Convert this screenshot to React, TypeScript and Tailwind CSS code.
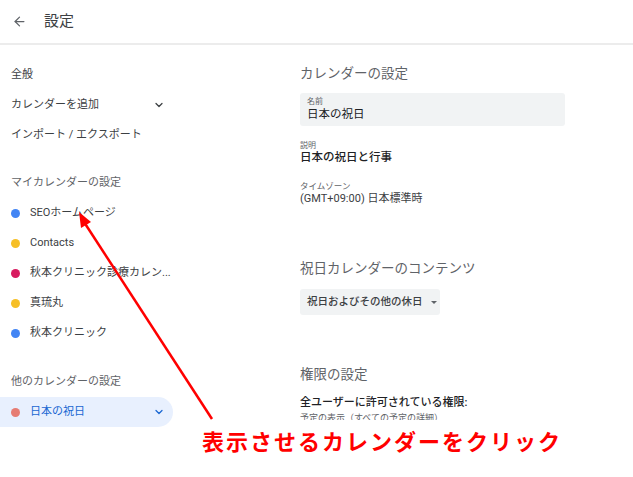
import { ArrowLeft, ChevronDown } from "lucide-react";

const font = { fontFamily: 'Roboto, "Noto Sans CJK JP", sans-serif' };

type Cal = { name: string; color: string };

const myCalendars: Cal[] = [
  { name: "SEOホームページ", color: "bg-[#4285f4]" },
  { name: "Contacts", color: "bg-[#f6bf26]" },
  { name: "秋本クリニック診療カレン...", color: "bg-[#d81b60]" },
  { name: "真琉丸", color: "bg-[#f6bf26]" },
  { name: "秋本クリニック", color: "bg-[#4285f4]" },
];

function NavRow({ label, chevron }: { label: string; chevron?: boolean }) {
  return (
    <div className="flex h-[30px] items-center justify-between whitespace-nowrap pl-[11px] pr-[8px] text-[11px] text-[#3c4043]">
      <span>{label}</span>
      {chevron && <ChevronDown className="h-3 w-3 text-[#3c4043]" strokeWidth={2.5} />}
    </div>
  );
}

function CalRow({ cal }: { cal: Cal }) {
  return (
    <div className="flex h-[30px] items-center whitespace-nowrap pl-[11px] text-[11px] text-[#3c4043]">
      <span className={`mr-[10px] h-[9px] w-[9px] shrink-0 rounded-full ${cal.color}`} />
      <span>{cal.name}</span>
    </div>
  );
}

export default function App() {
  return (
    <div className="relative h-[477px] w-[633px] overflow-hidden bg-white" style={font}>
      {/* Header */}
      <div className="flex h-[45px] items-center border-b-2 border-[#ececec] pl-[12px]">
        <ArrowLeft className="h-[15px] w-[15px] text-[#5f6368]" strokeWidth={2} />
        <span className="ml-[17px] text-[15px] text-[#3c4043]">設定</span>
      </div>

      <div className="flex">
        {/* Sidebar */}
        <div className="w-[173px] shrink-0 pt-[15px]">
          <NavRow label="全般" />
          <NavRow label="カレンダーを追加" chevron />
          <NavRow label="インポート / エクスポート" />

          <div className="mt-[18px] flex h-[30px] items-center pl-[11px] text-[11px] text-[#5f6368]">
            マイカレンダーの設定
          </div>
          {myCalendars.map((c) => (
            <CalRow key={c.name} cal={c} />
          ))}

          <div className="mt-[19px] flex h-[30px] items-center pl-[11px] text-[11px] text-[#5f6368]">
            他のカレンダーの設定
          </div>
          <div className="flex h-[30px] items-center justify-between rounded-r-full bg-[#e8f0fe] pl-[11px] pr-[8px] text-[11px] text-[#1967d2]">
            <div className="flex items-center">
              <span className="mr-[10px] h-[9px] w-[9px] rounded-full bg-[#e67c73]" />
              <span>日本の祝日</span>
            </div>
            <ChevronDown className="h-3 w-3" strokeWidth={2.5} />
          </div>
        </div>

        {/* Main */}
        <div className="ml-[127px] flex-1 pt-[17px] text-[#3c4043]">
          <div className="text-[13.5px] leading-[22px] text-[#5f6368]">カレンダーの設定</div>
          <div className="mt-[9px] flex h-[33px] w-[265px] flex-col justify-center rounded-[3px] bg-[#f1f3f4] px-[7px]">
            <div className="text-[8px] leading-[10px] text-[#5f6368]">名前</div>
            <div className="text-[11.5px] leading-[15px] text-[#202124]">日本の祝日</div>
          </div>

          <div className="mt-[15px]">
            <div className="text-[8px] leading-[9px] text-[#5f6368]">説明</div>
            <div className="text-[11.5px] font-medium leading-[14px] text-[#202124]">日本の祝日と行事</div>
          </div>

          <div className="mt-[16px]">
            <div className="text-[8.5px] leading-[12px] text-[#5f6368]">タイムゾーン</div>
            <div className="text-[11px] leading-[14px] text-[#3c4043]">(GMT+09:00) 日本標準時</div>
          </div>

          <div className="mt-[51px] text-[13.5px] leading-[22px] text-[#5f6368]">祝日カレンダーのコンテンツ</div>
          <div className="mt-[10px] flex h-[26px] w-[140px] items-center rounded-[3px] bg-[#f1f3f4] pl-[7px] text-[10.5px] font-medium text-[#3c4043]">
            <span>祝日およびその他の休日</span>
            <span className="ml-[8px] h-0 w-0 border-x-[3px] border-t-[3px] border-x-transparent border-t-[#5f6368]" />
          </div>

          <div className="mt-[48px] text-[13.5px] leading-[22px] text-[#5f6368]">権限の設定</div>
          <div className="mt-[11px] text-[11px] font-medium leading-[14px] text-[#202124]">全ユーザーに許可されている権限:</div>
          <div className="mt-[2px] text-[9px] leading-[12px] text-[#5f6368]">予定の表示（すべての予定の詳細）</div>
        </div>
      </div>

      {/* Annotation */}
      <div className="absolute left-[180px] right-0 top-[420px] bottom-0 bg-white">
        <div className="pl-[22px] pt-[6px] text-[22px] font-bold tracking-[2px] text-[#ff0000]">
          表示させるカレンダーをクリック
        </div>
      </div>
      <svg className="pointer-events-none absolute inset-0" width="633" height="477">
        <line x1="212" y1="419" x2="84" y2="222" stroke="#ff0000" strokeWidth="2.5" />
        <polygon points="79,212 81,228 91,222" fill="#ff0000" />
      </svg>
    </div>
  );
}
